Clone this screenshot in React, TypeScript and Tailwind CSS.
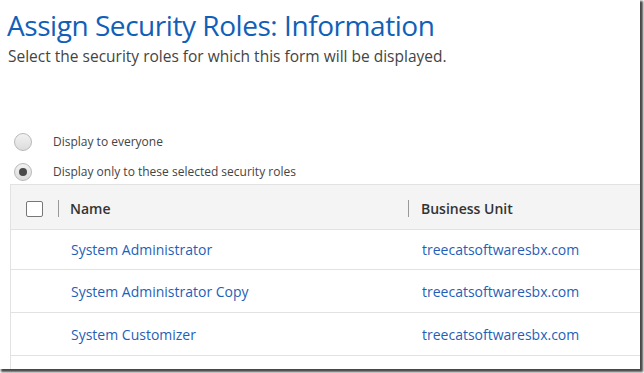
import React from "react";

const roles = [
  { name: "System Administrator", unit: "treecatsoftwaresbx.com" },
  { name: "System Administrator Copy", unit: "treecatsoftwaresbx.com" },
  { name: "System Customizer", unit: "treecatsoftwaresbx.com" },
];

const Radio = ({ checked }: { checked?: boolean }) => (
  <span className="flex h-[18px] w-[18px] items-center justify-center rounded-full border border-[#b9b9b9] bg-gradient-to-b from-[#f2f2f2] to-[#dcdcdc]">
    {checked && <span className="h-[8px] w-[8px] rounded-full bg-[#4a4a4a]" />}
  </span>
);

const App = () => {
  return (
    <div className="h-[373px] w-[644px] overflow-hidden bg-white font-['Open_Sans',sans-serif]">
      <div className="flex h-[369px] w-[640px] flex-col bg-white shadow-[2px_2px_2px_1px_rgba(40,40,40,0.85)]">
        <h1 className="pl-[7px] pt-[7px] text-[28px] leading-[36px] tracking-[-0.45px] text-[#1160b7]">
          Assign Security Roles: Information
        </h1>
        <p className="mt-[2px] pl-[8px] text-[15.5px] leading-[22px] text-[#444]">
          Select the security roles for which this form will be displayed.
        </p>

        <div className="mt-[66px] flex flex-col gap-[12px] pl-[14px]">
          <label className="flex items-center gap-[21px] text-[12px] text-[#444]">
            <Radio />
            Display to everyone
          </label>
          <label className="flex items-center gap-[21px] text-[12px] text-[#444]">
            <Radio checked />
            Display only to these selected security roles
          </label>
        </div>

        <div className="ml-[10px] mt-[3px] flex flex-1 flex-col border-l border-[#e2e2e2]">
          <div className="flex h-[46px] items-center border-y border-[#e2e2e2] bg-[#f4f4f4] pt-[3px] text-[14px] font-semibold text-[#333]">
            <span className="ml-[15px] h-[16px] w-[17px] rounded-[2px] border border-[#777] bg-white" />
            <span className="ml-[15px] h-[17px] w-px bg-[#999]" />
            <span className="ml-[11px] w-[338px]">Name</span>
            <span className="h-[17px] w-px bg-[#999]" />
            <span className="ml-[12px]">Business Unit</span>
          </div>
          {roles.map((r, i) => (
            <div
              key={r.name}
              className={`flex items-center border-b border-[#e2e2e2] text-[14px] text-[#1f5fb8] ${
                i === 0 ? "h-[40px]" : "h-[43px]"
              }`}
            >
              <span className="ml-[60px] w-[351px]">{r.name}</span>
              <span>{r.unit}</span>
            </div>
          ))}
        </div>
      </div>
    </div>
  );
};

export default App;
